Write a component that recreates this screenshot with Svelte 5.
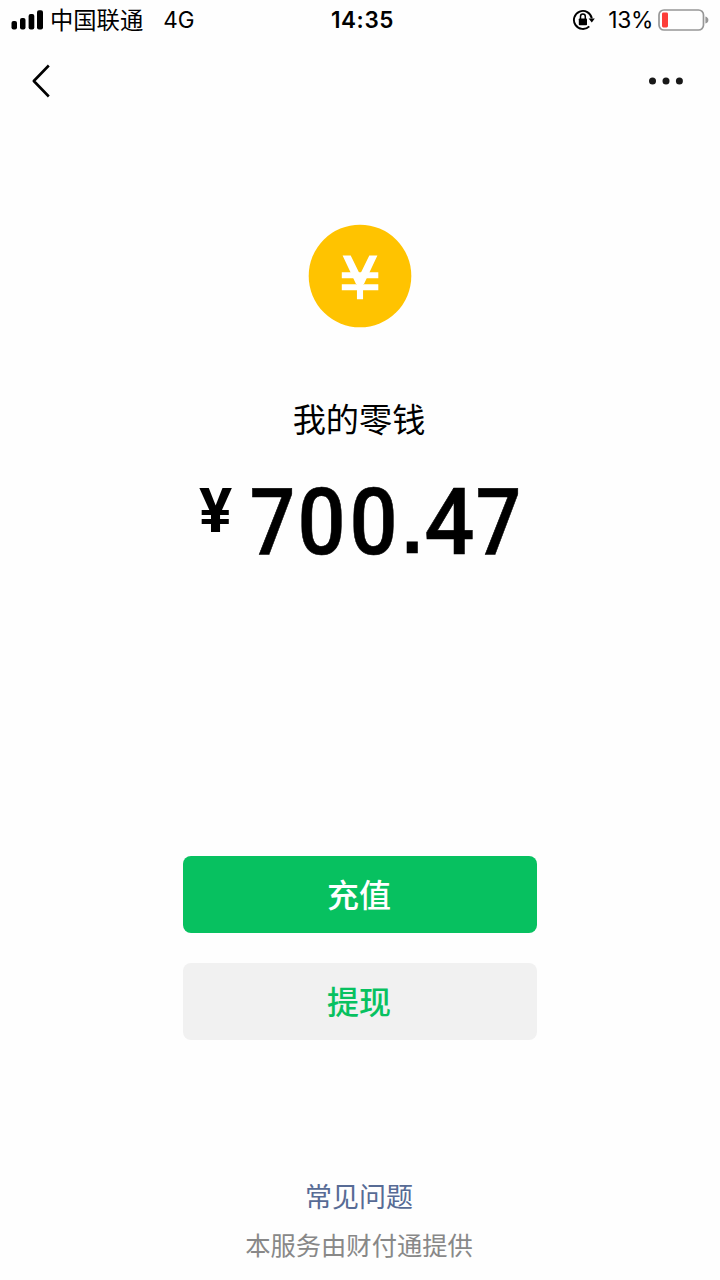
<script>
  const carrier = '中国联通';
  const balance = '700.47';
  const battery = 13;

  // narrow glyphs get their own cell width in the balance
  const cellClass = { '.': 'point', '4': 'four', '7': 'seven' };
</script>

<div class="screen">
  <header class="status-bar">
    <div class="status-left">
      <svg class="signal" width="33" height="20" viewBox="0 0 33 20">
        <rect x="0.5" y="11" width="5.5" height="8.5" rx="2" />
        <rect x="9" y="8" width="5.5" height="11.5" rx="2" />
        <rect x="17.6" y="4" width="5.7" height="15.5" rx="2" />
        <rect x="26" y="0.3" width="6" height="19.2" rx="2" />
      </svg>
      <span class="carrier">{carrier}</span>
      <span class="network">4G</span>
    </div>

    <span class="time">14:35</span>

    <div class="status-right">
      <svg class="rotation-lock" width="24" height="22" viewBox="0 0 24 22">
        <path d="M17.3 17.3 A9 9 0 1 1 19.8 9.4" fill="none" stroke="#000" stroke-width="1.9" />
        <path d="M16.6 9.4 H22.8 L19.8 13.6 Z" />
        <rect x="6.8" y="9.4" width="8.2" height="6.8" rx="0.8" />
        <path d="M8.5 10 V7.6 a2.4 2.5 0 0 1 4.8 0 V10" fill="none" stroke="#000" stroke-width="1.5" />
      </svg>
      <span class="percent">{battery}%</span>
      <svg class="battery" width="51" height="22" viewBox="0 0 51 22">
        <rect x="1" y="1" width="44.5" height="20" rx="5" fill="none" stroke="#979797" stroke-width="1.7" />
        <rect x="4" y="3.6" width="6" height="14.8" rx="1.4" fill="#fc3d39" />
        <path d="M47.4 7.5 Q50.4 8.5 50.4 11 Q50.4 13.5 47.4 14.5 Z" fill="#979797" />
      </svg>
    </div>
  </header>

  <nav class="nav-bar">
    <svg width="20" height="34" viewBox="0 0 20 34">
      <path d="M17.8 1.5 L2.8 17 L17.8 32.5" fill="none" stroke="#000" stroke-width="2.6" stroke-linejoin="round" />
    </svg>
    <svg width="36" height="8" viewBox="0 0 36 8">
      <circle cx="4.5" cy="4" r="3.5" fill="#181818" />
      <circle cx="18" cy="4" r="3.5" fill="#181818" />
      <circle cx="31.4" cy="4" r="3.5" fill="#181818" />
    </svg>
  </nav>

  <main>
    <svg class="coin" width="104" height="104" viewBox="0 0 104 104">
      <circle cx="52" cy="52" r="51.3" fill="#ffc300" />
      <path d="M34.6 31.5 H42.7 L52 50.5 L61.3 31.5 H69.4 L56 60 H48 Z" fill="#fff" />
      <path d="M52 54 V75.3 M33.8 51.3 H70.3 M33.8 63.2 H70.3" fill="none" stroke="#fff" stroke-width="6.1" />
    </svg>

    <h1>我的零钱</h1>

    <div class="balance">
      <span class="currency">¥</span>
      <span class="amount">
        {#each balance as char}<span class="cell {cellClass[char] ?? ''}"><span class="glyph">{char}</span></span>{/each}
      </span>
    </div>

    <div class="actions">
      <button class="btn primary">充值</button>
      <button class="btn secondary">提现</button>
    </div>
  </main>

  <footer>
    <a href="#faq">常见问题</a>
    <p>本服务由财付通提供</p>
  </footer>
</div>

<style>
  :global(body) {
    background: #fff;
  }

  .screen {
    box-sizing: border-box;
    width: 720px;
    height: 1280px;
    display: flex;
    flex-direction: column;
    overflow: hidden;
    background: #fefefe;
    color: #000;
    font-family: Inter, "Noto Sans CJK SC", sans-serif;
  }

  .status-bar {
    display: grid;
    grid-template-columns: 1fr auto 1fr;
    align-items: center;
    height: 40px;
    padding: 0 11px;
    line-height: 40px;
    white-space: nowrap;
  }

  .status-left,
  .status-right {
    display: flex;
    align-items: center;
    height: 40px;
  }

  .status-right {
    justify-content: flex-end;
  }

  .carrier {
    margin-left: 6px;
    padding-top: 2px;
    font-size: 23.3px;
  }

  .network {
    margin-left: 20px;
    font-size: 22.5px;
  }

  .time {
    margin-left: 5px;
    font-size: 22.5px;
    font-weight: 600;
    letter-spacing: 0.6px;
  }

  .rotation-lock {
    margin-right: 12px;
  }

  .percent {
    margin-right: 5px;
    font-size: 22.8px;
    letter-spacing: -0.3px;
  }

  .nav-bar {
    display: flex;
    align-items: center;
    justify-content: space-between;
    height: 81px;
    padding: 0 36px 0 31px;
  }

  main {
    display: flex;
    flex-direction: column;
    align-items: center;
    padding-top: 103px;
  }

  h1 {
    margin: 67px 2px 0 0;
    font-size: 33.2px;
    font-weight: 400;
    line-height: 50px;
  }

  .balance {
    display: flex;
    align-items: flex-start;
    width: 322px;
    height: 108px;
    margin-top: 21px;
    font-family: Roboto, sans-serif;
    font-weight: 500;
  }

  .currency {
    margin-right: 16.5px;
    font-size: 62px;
    font-weight: 700;
    line-height: 90px;
  }

  .amount {
    display: flex;
    font-size: 93px;
    line-height: 113px;
  }

  .cell {
    display: flex;
    flex: none;
    justify-content: center;
    width: 52px;
  }

  .glyph {
    display: block;
    transform: scaleX(0.91);
    -webkit-text-stroke: 0.6px #000;
  }

  .seven {
    width: 47px;
  }

  .seven .glyph {
    transform: scaleX(0.86);
  }

  .four {
    width: 50px;
  }

  .four .glyph {
    transform: scaleX(0.95);
  }

  .point {
    width: 25px;
  }

  .point .glyph {
    font-family: "Liberation Sans", sans-serif;
    font-size: 74px;
    font-weight: 700;
    line-height: 124px;
    transform: none;
  }

  .actions {
    display: flex;
    flex-direction: column;
    gap: 30px;
    margin-top: 282px;
  }

  .btn {
    width: 354px;
    height: 77px;
    padding: 0 2px 4px 0;
    border: 0;
    border-radius: 8px;
    font-family: "Noto Sans CJK SC", sans-serif;
    font-size: 32px;
    font-weight: 500;
  }

  .primary {
    background: #07c160;
    color: #fff;
  }

  .secondary {
    background: #f1f1f1;
    color: #07c160;
  }

  footer {
    display: flex;
    flex-direction: column;
    align-items: center;
    margin-top: auto;
    padding: 0 2px 15px 0;
  }

  footer a {
    color: #576b95;
    font-size: 27px;
    line-height: 40px;
    text-decoration: none;
  }

  footer p {
    margin: 9px 0 0;
    color: #888;
    font-size: 25.3px;
    line-height: 38px;
  }
</style>
